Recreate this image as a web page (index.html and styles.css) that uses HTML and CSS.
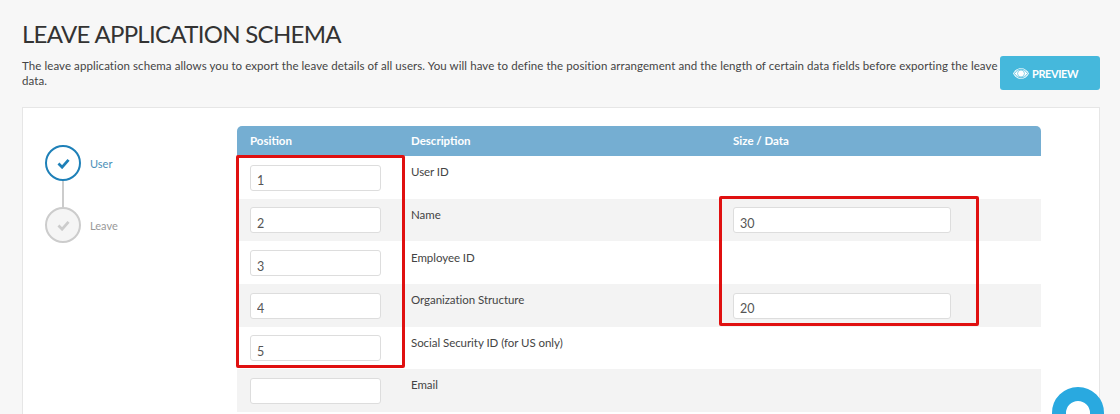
FILE: index.html
```html
<!DOCTYPE html>
<html lang="en">
<head>
<meta charset="utf-8">
<title>Leave Application Schema</title>
<link rel="stylesheet" href="styles.css">
</head>
<body>
<main class="page">
  <h1 class="title">LEAVE APPLICATION SCHEMA</h1>
  <div class="intro">
    <p class="intro-text">The leave application schema allows you to export the leave details of all users. You will have to define the position arrangement and the length of certain data fields before exporting the leave data.</p>
    <button class="preview" type="button">
      <svg class="eye" viewBox="0 0 18 12" width="16" height="11"><path fill="#fff" d="M9 0C5 0 2 2.300 0 6c2 3.700 5 6 9 6s7-2.300 9-6c-2-3.700-5-6-9-6z"/><path fill="none" stroke="#45b8dc" stroke-width="1" d="M1.600 6C3.400 3 6 1.200 9 1.200S14.600 3 16.400 6C14.600 9 12 10.800 9 10.800S3.400 9 1.600 6z"/><circle cx="9" cy="6" r="3.900" fill="#fff" stroke="#45b8dc" stroke-width="0.700"/></svg>
      <span class="preview-label">PREVIEW</span>
    </button>
  </div>
  <section class="card">
    <ol class="steps">
      <li class="step step-active">
        <span class="step-dot"><svg viewBox="0 0 14 12" width="13" height="11"><path fill="none" stroke="currentColor" stroke-width="3" d="M1.500 6l4 4 7-8"/></svg></span>
        <span class="step-label">User</span>
      </li>
      <li class="step-line"></li>
      <li class="step">
        <span class="step-dot"><svg viewBox="0 0 14 12" width="13" height="11"><path fill="none" stroke="currentColor" stroke-width="3" d="M1.500 6l4 4 7-8"/></svg></span>
        <span class="step-label">Leave</span>
      </li>
    </ol>
    <div class="schema">
      <div class="row head"><span>Position</span><span>Description</span><span>Size / Data</span></div>
      <div class="row"><input class="field" value="1"><span class="desc">User ID</span></div>
      <div class="row"><input class="field" value="2"><span class="desc">Name</span><input class="field field-wide" value="30"></div>
      <div class="row"><input class="field" value="3"><span class="desc">Employee ID</span></div>
      <div class="row"><input class="field" value="4"><span class="desc">Organization Structure</span><input class="field field-wide" value="20"></div>
      <div class="row"><input class="field" value="5"><span class="desc">Social Security ID (for US only)</span></div>
      <div class="row"><input class="field" value=""><span class="desc">Email</span></div>
    </div>
  </section>
</main>
<div class="mark mark-position"></div>
<div class="mark mark-size"></div>
<div class="chat-clip"><div class="chat"></div></div>
</body>
</html>
```
FILE: styles.css
```css
html, body { margin: 0; height: 414px; overflow: hidden; background: #f7f7f7; }
body { font-family: Lato, sans-serif; color: #444; position: relative; }
.page { padding: 20px 20px 0 22px; height: 414px; box-sizing: border-box; overflow: hidden; }
.title { margin: 0; font-family: Lato, sans-serif; font-weight: 400; font-size: 24px; line-height: 28px; color: #333; letter-spacing: -0.7px; }
.intro { display: flex; align-items: flex-start; justify-content: space-between; margin-top: 8px; height: 51px; }
.intro-text { margin: 0; width: 978px; font-size: 11.500px; line-height: 15px; padding-top: 2px; color: #444; letter-spacing: 0.08px; }
.preview { width: 100px; height: 34px; border: 0; border-radius: 3px; background: #45b8dc; color: #fff; font: 700 11px Lato, sans-serif; letter-spacing: -0.4px; display: flex; align-items: center; justify-content: flex-start; gap: 3px; padding: 0 0 0 13px; }
.card { display: flex; background: #fff; border: 1px solid #e6e6e6; height: 400px; box-sizing: border-box; width: 1078px; }
.steps { list-style: none; margin: 0; padding: 37px 0 0 22px; width: 192px; }
.step { display: flex; align-items: center; gap: 9px; }
.step-dot { width: 36px; height: 36px; box-sizing: border-box; border: 2px solid #ccc; border-radius: 50%; color: #ccc; display: flex; align-items: center; justify-content: center; background: #f5f5f5; }
.step-label { font-size: 11px; color: #999; }
.step-active .step-dot { border-color: #1e80b8; color: #1e80b8; background: #fff; }
.step-active .step-label { color: #4a8fb8; }
.step-line { width: 2px; height: 26px; margin-left: 17px; background: #ccc; }
.schema { width: 804px; margin-top: 18px; }
.row { display: grid; grid-template-columns: 174px 322px 1fr; height: 42.670px; box-sizing: border-box; padding: 8.800px 0 0 13px; font-size: 11.500px; align-items: start; }
.row:nth-child(odd) { background: #f3f3f3; }
.row.head { height: 30px; padding: 8px 0 0 13px; background: #75aed2; border-radius: 5px 5px 0 0; color: #fff; font-weight: 700; font-size: 11.500px; }
.desc { line-height: 14px; padding-top: 0.400px; color: #444; letter-spacing: -0.05px; }
.row .desc { margin-left: -13px; }
.row.head span:nth-child(2), .row.head span:nth-child(3) { margin-left: -13px; }
.field { width: 131px; height: 26px; box-sizing: border-box; border: 1px solid #ddd; border-radius: 3px; background: #fff; padding: 6px 6px 0; font: 12.500px Lato, sans-serif; color: #555; outline: 0; }
.field-wide { width: 218px; margin-left: -13px; }
.mark { position: absolute; border: 3px solid #e01010; border-radius: 2px; box-sizing: border-box; }
.mark-position { left: 236px; top: 155px; width: 169px; height: 213px; }
.mark-size { left: 719px; top: 196px; width: 260px; height: 130px; }
.chat-clip { position: absolute; left: 1052px; top: 387px; width: 52px; height: 27px; overflow: hidden; }
.chat { width: 52px; height: 52px; box-sizing: border-box; border: 14px solid #29a9e0; border-radius: 50%; background: #fff; }
```
